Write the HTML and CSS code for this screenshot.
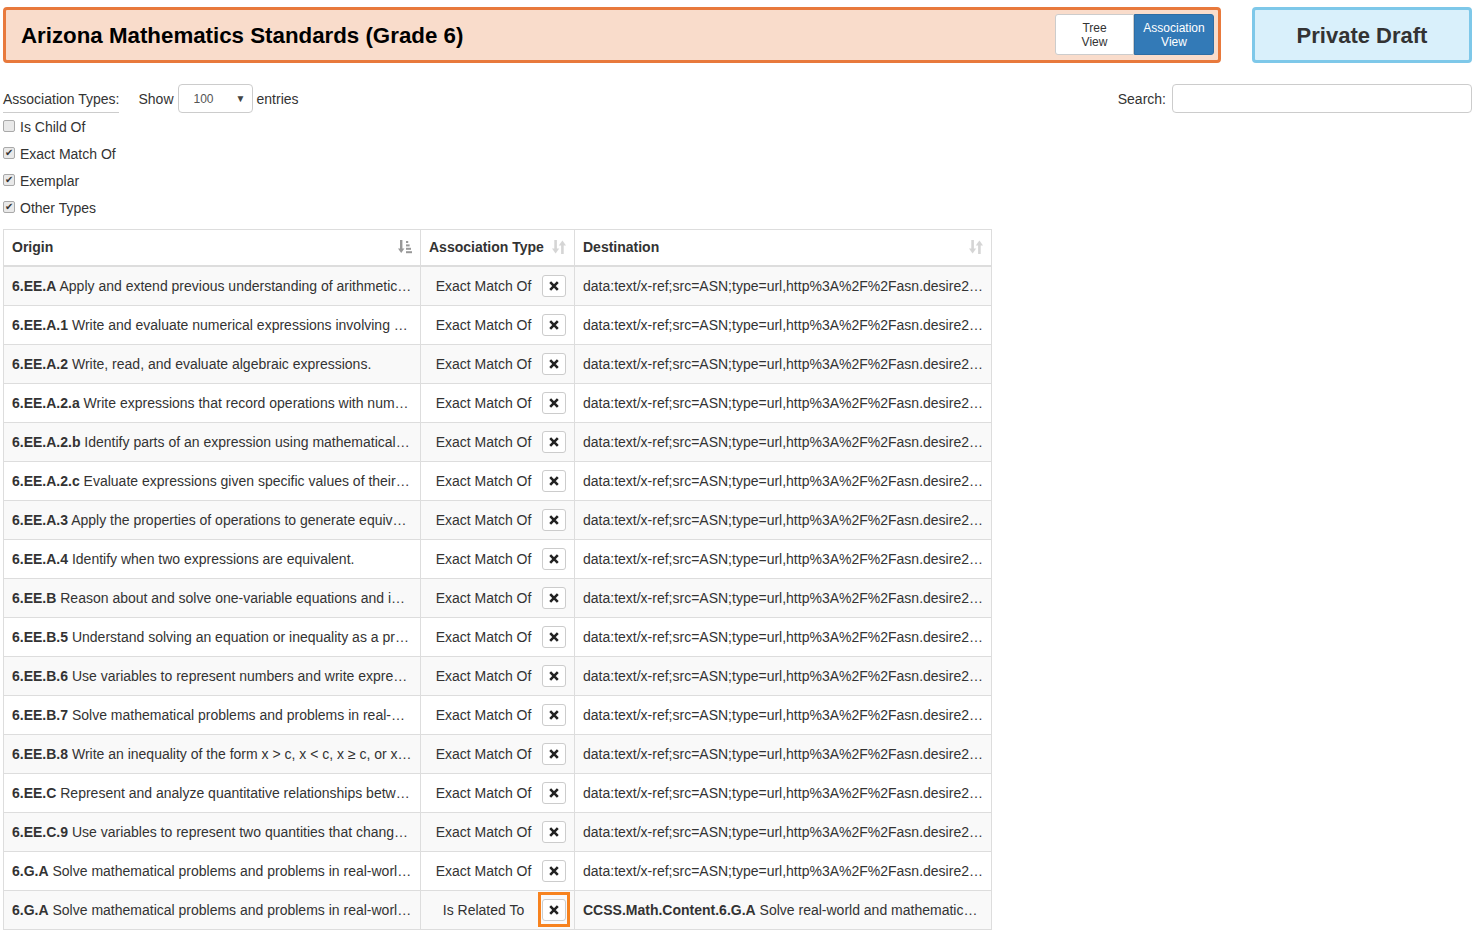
FILE: index.html
```html
<!DOCTYPE html>
<html lang="en">
<head>
<meta charset="utf-8">
<title>Arizona Mathematics Standards (Grade 6)</title>
<link rel="stylesheet" href="styles.css">
</head>
<body>
<div class="page">
  <div class="topbar">
    <div class="titlebox">
      <h1 class="title">Arizona Mathematics Standards (Grade 6)</h1>
      <div class="toggle">
        <button class="tg">Tree<br>View</button><button class="tg active">Association<br>View</button>
      </div>
    </div>
    <div class="draft">Private Draft</div>
  </div>

  <div class="controls">
    <div class="controls-left">
      <span class="legend">Association Types:</span>
      <span class="show">Show <span class="select"><span class="select-val">100</span><span class="caret">&#9660;</span></span> entries</span>
    </div>
    <label class="search">Search: <input class="search-input" type="text"></label>
  </div>

  <ul class="types">
    <li class="type"><span class="cb"></span>Is Child Of</li>
    <li class="type"><span class="cb checked">&#10004;</span>Exact Match Of</li>
    <li class="type"><span class="cb checked">&#10004;</span>Exemplar</li>
    <li class="type"><span class="cb checked">&#10004;</span>Other Types</li>
  </ul>

  <table class="assoc">
    <thead>
      <tr>
        <th class="c-origin"><div class="th-in"><span>Origin</span>
          <svg class="sort sorted" width="14" height="14" viewBox="0 0 14 14"><rect x="2" y="0" width="2.4" height="9.5"/><polygon points="0,8.5 6.4,8.5 3.2,13"/><rect x="8" y="1" width="2.2" height="2"/><rect x="8" y="4.4" width="3.6" height="2"/><rect x="8" y="7.8" width="5" height="2"/><rect x="8" y="11.2" width="6" height="2"/></svg></div></th>
        <th class="c-type"><div class="th-in"><span>Association Type</span>
          <svg class="sort" width="14" height="14" viewBox="0 0 14 14"><rect x="2.3" y="0" width="2.6" height="9.5"/><polygon points="0,8.5 7.2,8.5 3.6,13.5"/><rect x="9.1" y="4.5" width="2.6" height="9.5"/><polygon points="6.8,5.5 14,5.5 10.4,0.5"/></svg></div></th>
        <th class="c-dest"><div class="th-in"><span>Destination</span>
          <svg class="sort" width="14" height="14" viewBox="0 0 14 14"><rect x="2.3" y="0" width="2.6" height="9.5"/><polygon points="0,8.5 7.2,8.5 3.6,13.5"/><rect x="9.1" y="4.5" width="2.6" height="9.5"/><polygon points="6.8,5.5 14,5.5 10.4,0.5"/></svg></div></th>
      </tr>
    </thead>
    <tbody>
      <tr><td><b>6.EE.A</b> Apply and extend previous understanding of arithmetic to algebraic expressions.</td><td><div class="ti"><span class="tn">Exact Match Of</span><button class="rm"><svg width="10" height="10" viewBox="0 0 10 10"><path d="M1.2 1.2L8.8 8.8M8.8 1.2L1.2 8.8"/></svg></button></div></td><td>data:text/x-ref;src=ASN;type=url,http%3A%2F%2Fasn.desire2learn.com%2Fresources%2FS1143594</td></tr>
      <tr><td><b>6.EE.A.1</b> Write and evaluate numerical expressions involving whole-number exponents.</td><td><div class="ti"><span class="tn">Exact Match Of</span><button class="rm"><svg width="10" height="10" viewBox="0 0 10 10"><path d="M1.2 1.2L8.8 8.8M8.8 1.2L1.2 8.8"/></svg></button></div></td><td>data:text/x-ref;src=ASN;type=url,http%3A%2F%2Fasn.desire2learn.com%2Fresources%2FS1143595</td></tr>
      <tr><td><b>6.EE.A.2</b> Write, read, and evaluate algebraic expressions.</td><td><div class="ti"><span class="tn">Exact Match Of</span><button class="rm"><svg width="10" height="10" viewBox="0 0 10 10"><path d="M1.2 1.2L8.8 8.8M8.8 1.2L1.2 8.8"/></svg></button></div></td><td>data:text/x-ref;src=ASN;type=url,http%3A%2F%2Fasn.desire2learn.com%2Fresources%2FS1143596</td></tr>
      <tr><td><b>6.EE.A.2.a</b> Write expressions that record operations with numbers and with letters standing for numbers.</td><td><div class="ti"><span class="tn">Exact Match Of</span><button class="rm"><svg width="10" height="10" viewBox="0 0 10 10"><path d="M1.2 1.2L8.8 8.8M8.8 1.2L1.2 8.8"/></svg></button></div></td><td>data:text/x-ref;src=ASN;type=url,http%3A%2F%2Fasn.desire2learn.com%2Fresources%2FS1143597</td></tr>
      <tr><td><b>6.EE.A.2.b</b> Identify parts of an expression using mathematical terms (sum, term, product, factor, quotient, coefficient).</td><td><div class="ti"><span class="tn">Exact Match Of</span><button class="rm"><svg width="10" height="10" viewBox="0 0 10 10"><path d="M1.2 1.2L8.8 8.8M8.8 1.2L1.2 8.8"/></svg></button></div></td><td>data:text/x-ref;src=ASN;type=url,http%3A%2F%2Fasn.desire2learn.com%2Fresources%2FS1143598</td></tr>
      <tr><td><b>6.EE.A.2.c</b> Evaluate expressions given specific values of their variables.</td><td><div class="ti"><span class="tn">Exact Match Of</span><button class="rm"><svg width="10" height="10" viewBox="0 0 10 10"><path d="M1.2 1.2L8.8 8.8M8.8 1.2L1.2 8.8"/></svg></button></div></td><td>data:text/x-ref;src=ASN;type=url,http%3A%2F%2Fasn.desire2learn.com%2Fresources%2FS1143599</td></tr>
      <tr><td><b>6.EE.A.3</b> Apply the properties of operations to generate equivalent expressions.</td><td><div class="ti"><span class="tn">Exact Match Of</span><button class="rm"><svg width="10" height="10" viewBox="0 0 10 10"><path d="M1.2 1.2L8.8 8.8M8.8 1.2L1.2 8.8"/></svg></button></div></td><td>data:text/x-ref;src=ASN;type=url,http%3A%2F%2Fasn.desire2learn.com%2Fresources%2FS1143600</td></tr>
      <tr><td><b>6.EE.A.4</b> Identify when two expressions are equivalent.</td><td><div class="ti"><span class="tn">Exact Match Of</span><button class="rm"><svg width="10" height="10" viewBox="0 0 10 10"><path d="M1.2 1.2L8.8 8.8M8.8 1.2L1.2 8.8"/></svg></button></div></td><td>data:text/x-ref;src=ASN;type=url,http%3A%2F%2Fasn.desire2learn.com%2Fresources%2FS1143601</td></tr>
      <tr><td><b>6.EE.B</b> Reason about and solve one-variable equations and inequalities.</td><td><div class="ti"><span class="tn">Exact Match Of</span><button class="rm"><svg width="10" height="10" viewBox="0 0 10 10"><path d="M1.2 1.2L8.8 8.8M8.8 1.2L1.2 8.8"/></svg></button></div></td><td>data:text/x-ref;src=ASN;type=url,http%3A%2F%2Fasn.desire2learn.com%2Fresources%2FS1143602</td></tr>
      <tr><td><b>6.EE.B.5</b> Understand solving an equation or inequality as a process of answering a question.</td><td><div class="ti"><span class="tn">Exact Match Of</span><button class="rm"><svg width="10" height="10" viewBox="0 0 10 10"><path d="M1.2 1.2L8.8 8.8M8.8 1.2L1.2 8.8"/></svg></button></div></td><td>data:text/x-ref;src=ASN;type=url,http%3A%2F%2Fasn.desire2learn.com%2Fresources%2FS1143603</td></tr>
      <tr><td><b>6.EE.B.6</b> Use variables to represent numbers and write expressions when solving a problem.</td><td><div class="ti"><span class="tn">Exact Match Of</span><button class="rm"><svg width="10" height="10" viewBox="0 0 10 10"><path d="M1.2 1.2L8.8 8.8M8.8 1.2L1.2 8.8"/></svg></button></div></td><td>data:text/x-ref;src=ASN;type=url,http%3A%2F%2Fasn.desire2learn.com%2Fresources%2FS1143604</td></tr>
      <tr><td><b>6.EE.B.7</b> Solve mathematical problems and problems in real-world context.</td><td><div class="ti"><span class="tn">Exact Match Of</span><button class="rm"><svg width="10" height="10" viewBox="0 0 10 10"><path d="M1.2 1.2L8.8 8.8M8.8 1.2L1.2 8.8"/></svg></button></div></td><td>data:text/x-ref;src=ASN;type=url,http%3A%2F%2Fasn.desire2learn.com%2Fresources%2FS1143605</td></tr>
      <tr><td><b>6.EE.B.8</b> Write an inequality of the form x &gt; c, x &lt; c, x &ge; c, or x &le; c to represent a constraint.</td><td><div class="ti"><span class="tn">Exact Match Of</span><button class="rm"><svg width="10" height="10" viewBox="0 0 10 10"><path d="M1.2 1.2L8.8 8.8M8.8 1.2L1.2 8.8"/></svg></button></div></td><td>data:text/x-ref;src=ASN;type=url,http%3A%2F%2Fasn.desire2learn.com%2Fresources%2FS1143606</td></tr>
      <tr><td><b>6.EE.C</b> Represent and analyze quantitative relationships between dependent and independent variables.</td><td><div class="ti"><span class="tn">Exact Match Of</span><button class="rm"><svg width="10" height="10" viewBox="0 0 10 10"><path d="M1.2 1.2L8.8 8.8M8.8 1.2L1.2 8.8"/></svg></button></div></td><td>data:text/x-ref;src=ASN;type=url,http%3A%2F%2Fasn.desire2learn.com%2Fresources%2FS1143607</td></tr>
      <tr><td><b>6.EE.C.9</b> Use variables to represent two quantities that change in relationship to one another.</td><td><div class="ti"><span class="tn">Exact Match Of</span><button class="rm"><svg width="10" height="10" viewBox="0 0 10 10"><path d="M1.2 1.2L8.8 8.8M8.8 1.2L1.2 8.8"/></svg></button></div></td><td>data:text/x-ref;src=ASN;type=url,http%3A%2F%2Fasn.desire2learn.com%2Fresources%2FS1143608</td></tr>
      <tr><td><b>6.G.A</b> Solve mathematical problems and problems in real-world context involving area, surface area, and volume.</td><td><div class="ti"><span class="tn">Exact Match Of</span><button class="rm"><svg width="10" height="10" viewBox="0 0 10 10"><path d="M1.2 1.2L8.8 8.8M8.8 1.2L1.2 8.8"/></svg></button></div></td><td>data:text/x-ref;src=ASN;type=url,http%3A%2F%2Fasn.desire2learn.com%2Fresources%2FS1143609</td></tr>
      <tr><td><b>6.G.A</b> Solve mathematical problems and problems in real-world context involving area, surface area, and volume.</td><td><div class="ti"><span class="tn">Is Related To</span><span class="ring"><button class="rm"><svg width="10" height="10" viewBox="0 0 10 10"><path d="M1.2 1.2L8.8 8.8M8.8 1.2L1.2 8.8"/></svg></button></span></div></td><td><b>CCSS.Math.Content.6.G.A</b> Solve real-world and mathematical problems involving area, surface area, and volume.</td></tr>
    </tbody>
  </table>
</div>
</body>
</html>
```

FILE: styles.css
```css
* { box-sizing: border-box; }

html, body {
  margin: 0;
  padding: 0;
  background: #fff;
}

body {
  font-family: "Liberation Sans", Arial, Helvetica, sans-serif;
  font-size: 14px;
  line-height: 20px;
  color: #333;
  overflow: hidden;
}

.page {
  padding: 7px 12px 0 3px;
}

/* top bar */
.topbar {
  display: flex;
  align-items: stretch;
  gap: 31px;
  height: 56px;
}

.titlebox {
  width: 1218px;
  display: flex;
  align-items: center;
  justify-content: space-between;
  background: #f9dccb;
  border: 3px solid #e8793c;
  border-radius: 4px;
  padding: 0 4px 0 15px;
}

.title {
  margin: 0;
  font-size: 22.3px;
  line-height: 26px;
  font-weight: bold;
  color: #000;
  padding-top: 2px;
}

.toggle {
  display: flex;
  height: 41px;
  margin-top: -1px;
}

.tg {
  font-family: inherit;
  font-size: 12px;
  line-height: 14px;
  padding: 0;
  margin: 0;
  border: 1px solid #ccc;
  background: #fff;
  color: #333;
  width: 79px;
  height: 41px;
  border-radius: 3px 0 0 3px;
}

.tg.active {
  width: 80px;
  background: #337ab7;
  border-color: #2e6da4;
  color: #fff;
  border-radius: 0 3px 3px 0;
}

.draft {
  width: 220px;
  display: flex;
  align-items: center;
  justify-content: center;
  background: #d9f0fb;
  border: 3px solid #7ec8e9;
  border-radius: 4px;
  font-size: 22px;
  font-weight: bold;
  color: #333;
  padding-top: 1px;
}

/* controls */
.controls {
  margin-top: 21px;
  height: 29px;
  display: flex;
  align-items: center;
  justify-content: space-between;
}

.controls-left {
  display: flex;
  align-items: center;
  gap: 19px;
}

.legend {
  display: inline-block;
  white-space: nowrap;
  border-bottom: 1px solid #ccc;
  padding-top: 4px;
  padding-bottom: 3px;
}

.show {
  display: flex;
  align-items: center;
  gap: 4px;
}

.select {
  display: inline-flex;
  align-items: center;
  justify-content: space-between;
  width: 75px;
  height: 29px;
  border: 1px solid #ccc;
  border-radius: 4px;
  padding: 0 6px 0 15px;
  font-size: 12px;
  color: #555;
  background: #fff;
}

.caret {
  font-size: 10px;
  color: #444;
}

.search {
  display: flex;
  align-items: center;
  gap: 6px;
}

.search-input {
  width: 300px;
  height: 29px;
  border: 1px solid #ccc;
  border-radius: 4px;
  margin: 0;
  font-family: inherit;
}

/* type checkboxes */
.types {
  list-style: none;
  margin: 0;
  padding: 0;
}

.type {
  height: 27px;
  display: flex;
  align-items: center;
  gap: 5px;
}

.cb {
  width: 12px;
  height: 12px;
  border: 1px solid #a9a9a9;
  border-radius: 2px;
  background: #e9e9e9;
  display: inline-flex;
  align-items: center;
  justify-content: center;
  font-size: 10px;
  line-height: 1;
  color: #333;
  margin-top: -2px;
}

/* table */
.assoc {
  margin-top: 8px;
  width: 989px;
  table-layout: fixed;
  border-collapse: separate;
  border-spacing: 0;
  border-top: 1px solid #ddd;
  border-left: 1px solid #ddd;
}

.assoc th,
.assoc td {
  border-right: 1px solid #ddd;
  border-bottom: 1px solid #ddd;
  padding: 0 8px 1px;
  white-space: nowrap;
  overflow: hidden;
  text-overflow: ellipsis;
  text-align: left;
  vertical-align: middle;
}

.assoc th {
  height: 37px;
  border-bottom: 2px solid #ddd;
  font-weight: bold;
  padding-bottom: 2px;
}

.c-origin { width: 417px; }
.c-type { width: 154px; }
.c-dest { width: 417px; }

.th-in {
  display: flex;
  align-items: center;
  justify-content: space-between;
}

.sort {
  fill: #333;
  opacity: 0.2;
  flex: none;
}

.sort.sorted {
  opacity: 0.5;
}

.assoc td {
  height: 39px;
}

.assoc tbody tr:nth-child(odd) td {
  background: #f9f9f9;
}

.ti {
  display: flex;
  align-items: center;
  gap: 4px;
}

.tn {
  flex: 1;
  min-width: 0;
  text-align: center;
}

.rm {
  width: 24px;
  height: 22px;
  padding: 0;
  margin: 0;
  border: 1px solid #ccc;
  border-radius: 3px;
  background: #fff;
  display: inline-flex;
  align-items: center;
  justify-content: center;
  flex: none;
}

.rm svg {
  stroke: #222;
  stroke-width: 2.6;
  fill: none;
}

.ring {
  display: inline-flex;
  flex: none;
  border: 3px solid #f7821e;
  padding: 4px 1px 3px;
  margin: -7px -4px -6px;
}
```
